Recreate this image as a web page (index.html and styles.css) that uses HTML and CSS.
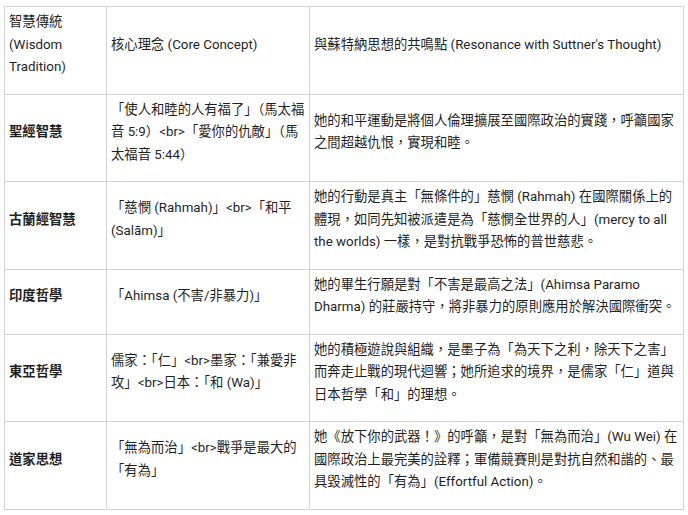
FILE: index.html
```html
<!DOCTYPE html>
<html lang="zh-Hant">
<head>
<meta charset="utf-8">
<link rel="stylesheet" href="styles.css">
</head>
<body>
<div class="wrap">
<table class="grid">
  <colgroup>
    <col class="c1"><col class="c2"><col class="c3">
  </colgroup>
  <thead>
    <tr>
      <th>智慧傳統 (Wisdom Tradition)</th>
      <th>核心理念 (Core Concept)</th>
      <th>與蘇特納思想的共鳴點 (Resonance with Suttner's Thought)</th>
    </tr>
  </thead>
  <tbody>
    <tr>
      <td class="name">聖經智慧</td>
      <td>「使人和睦的人有福了」（馬太福音 5:9）&lt;br&gt;「愛你的仇敵」（馬太福音 5:44）</td>
      <td>她的和平運動是將個人倫理擴展至國際政治的實踐，呼籲國家之間超越仇恨，實現和睦。</td>
    </tr>
    <tr>
      <td class="name">古蘭經智慧</td>
      <td>「慈憫 (Rahmah)」&lt;br&gt;「和平 (Salām)」</td>
      <td>她的行動是真主「無條件的」慈憫 (Rahmah) 在國際關係上的體現，如同先知被派遣是為「慈憫全世界的人」(mercy to all the worlds) 一樣，是對抗戰爭恐怖的普世慈悲。</td>
    </tr>
    <tr>
      <td class="name">印度哲學</td>
      <td>「Ahimsa (不害/非暴力)」</td>
      <td>她的畢生行願是對「不害是最高之法」(Ahimsa Paramo Dharma) 的莊嚴持守，將非暴力的原則應用於解決國際衝突。</td>
    </tr>
    <tr>
      <td class="name">東亞哲學</td>
      <td>儒家：「仁」&lt;br&gt;墨家：「兼愛非攻」&lt;br&gt;日本：「和 (Wa)」</td>
      <td>她的積極遊說與組織，是墨子為「為天下之利，除天下之害」而奔走止戰的現代迴響；她所追求的境界，是儒家「仁」道與日本哲學「和」的理想。</td>
    </tr>
    <tr>
      <td class="name">道家思想</td>
      <td>「無為而治」&lt;br&gt;戰爭是最大的「有為」</td>
      <td>她《放下你的武器！》的呼籲，是對「無為而治」(Wu Wei) 在國際政治上最完美的詮釋；軍備競賽則是對抗自然和諧的、最具毀滅性的「有為」(Effortful Action)。</td>
    </tr>
  </tbody>
</table>
</div>
</body>
</html>
```
FILE: styles.css
```css
html, body {
  margin: 0;
  padding: 0;
  background: #ffffff;
}
.wrap {
  padding: 6px 0 0 4px;
}
.grid {
  border-collapse: collapse;
  table-layout: fixed;
  width: 679px;
  font-family: "Roboto", "Noto Sans CJK TC", sans-serif;
  font-size: 13.33px;
  line-height: 22.5px;
  color: #1f1f1f;
}
.c1 { width: 102px; }
.c2 { width: 203px; }
.c3 { width: 374px; }
.grid th,
.grid td {
  border: 1px solid #d3d3d3;
  padding: 4px 4px 15px;
  text-align: left;
  vertical-align: middle;
  font-weight: 400;
}
.grid td.name {
  font-weight: 700;
}
```
